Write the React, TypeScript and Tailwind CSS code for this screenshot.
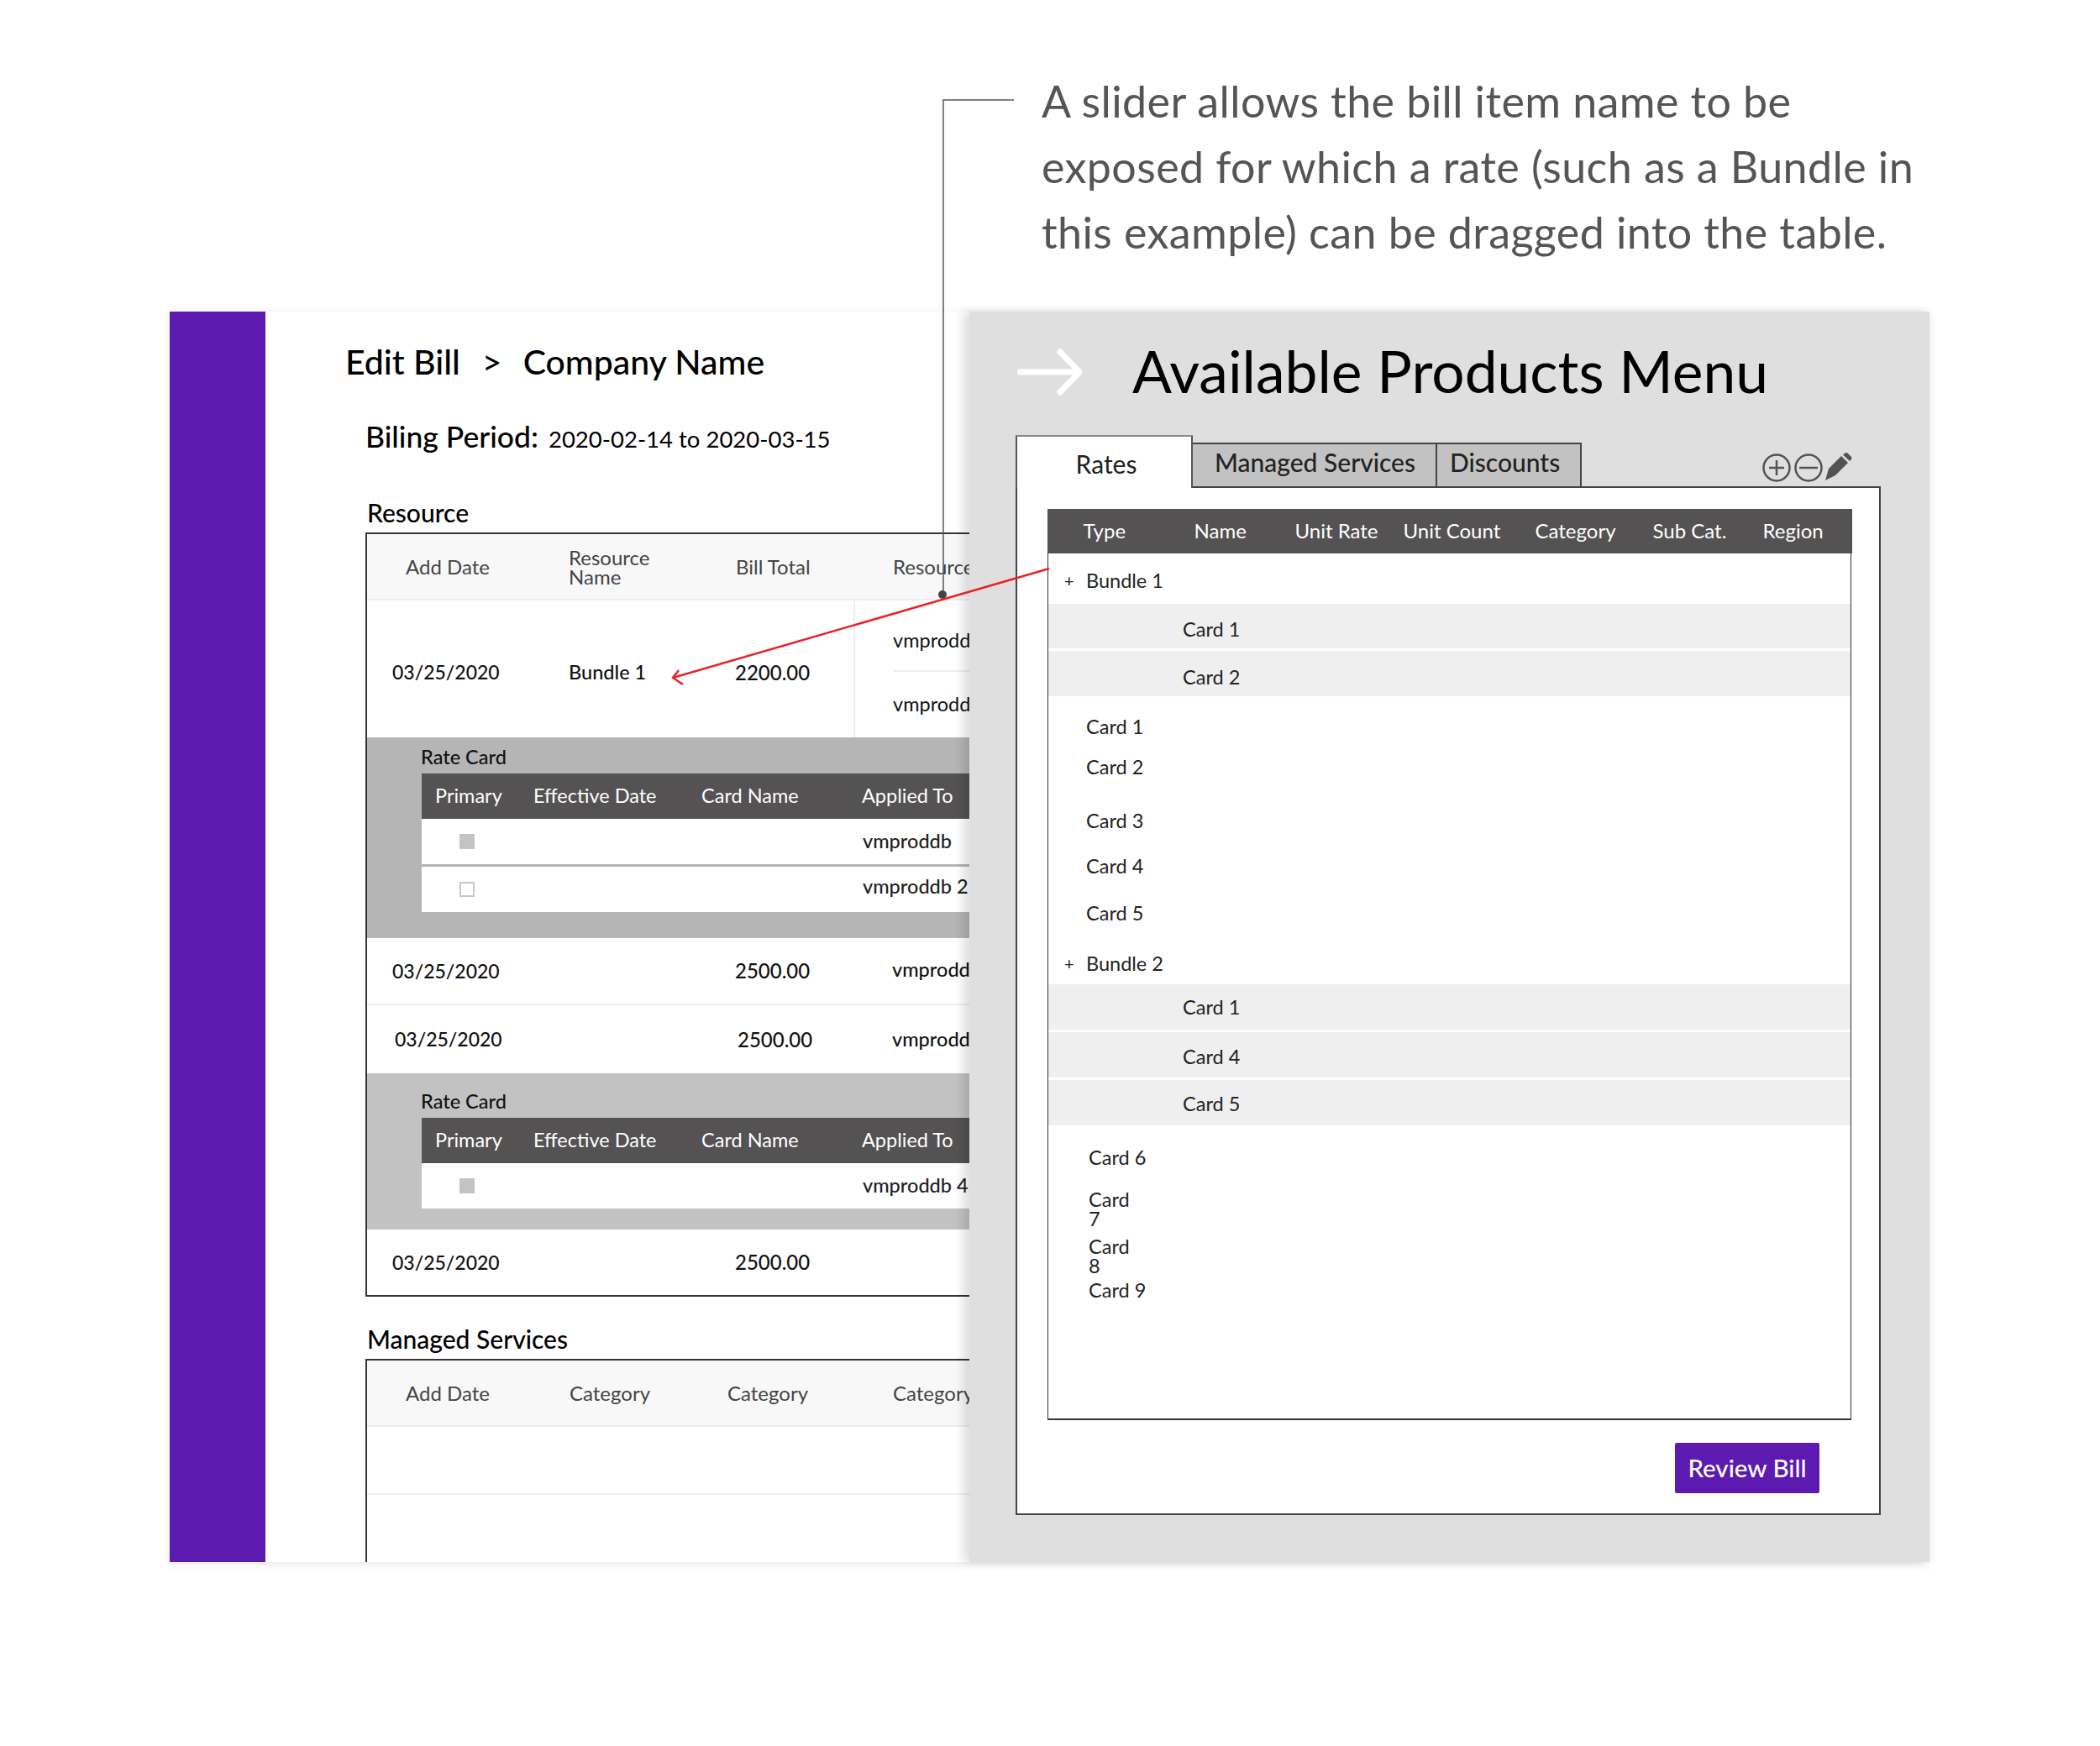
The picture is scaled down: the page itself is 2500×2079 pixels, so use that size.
const font = { fontFamily: "Lato, sans-serif" };

function Header({ labels }: { labels: { text: React.ReactNode; w: string }[] }) {
  return (
    <div className="flex h-[79px] items-center border-b-2 border-[#eeeeee] bg-[#f8f8f8] pl-[46px] text-[24px] leading-[23px] text-[#444444]">
      {labels.map((l, i) => (
        <div key={i} className={`${l.w} shrink-0`}>
          {l.text}
        </div>
      ))}
    </div>
  );
}

function RateCard({ rows, bg, h, top }: { rows: { filled: boolean; name: string; pb?: string }[]; bg: string; h: string; top: string }) {
  return (
    <div className={`${bg} ${h} ${top} pl-[64px] text-[23.5px]`}>
      <div className="h-[30px] font-medium leading-[30px] text-[#111111]">Rate Card</div>
      <div className="ml-[1px] mt-[5px] flex h-[54px] items-center bg-[#545253] pl-[16px] text-white">
        <div className="w-[117px]">Primary</div>
        <div className="w-[200px]">Effective Date</div>
        <div className="w-[191px]">Card Name</div>
        <div>Applied To</div>
      </div>
      {rows.map((r, i) => (
        <div key={i} className={`ml-[1px] flex h-[54px] items-center bg-white ${i > 0 ? "mt-[3px]" : ""}`}>
          <div className={`ml-[45px] h-[18px] w-[18px] ${r.filled ? "bg-[#c4c4c4]" : "border-2 border-[#c8c8c8]"}`} />
          <div className={`ml-[462px] whitespace-nowrap font-medium text-[#222222] ${r.pb ?? ""}`}>{r.name}</div>
        </div>
      ))}
    </div>
  );
}

function GrayRow({ label, h, pt }: { label: string; h: string; pt: string }) {
  return <div className={`flex items-center bg-[#efefef] pl-[160px] text-[#222222] ${h} ${pt}`}>{label}</div>;
}

export default function App() {
  return (
    <div className="relative h-[2079px] w-[2500px] overflow-hidden bg-white" style={font}>
      <div className="h-[371px] pl-[1240px] pt-[81px] text-[52px] leading-[78px] tracking-[0.4px] text-[#555555]">
        <div>A slider allows the bill item name to be</div>
        <div>exposed for which a rate (such as a Bundle in</div>
        <div>this example) can be dragged into the table.</div>
      </div>

      <div className="ml-[202px] flex h-[1489px] w-[2095px] shadow-[0_2px_10px_rgba(0,0,0,0.1)]">
        <div className="w-[114px] shrink-0 bg-[#5d1ab0]" />

        <div className="h-full w-[838px] shrink-0 overflow-hidden text-[#111111]">
          <div className="ml-[95px] mt-[40px] flex h-[40px] items-center whitespace-nowrap text-[41px] font-medium text-black">
            <span>Edit Bill</span>
            <span className="ml-[26px] font-normal">&gt;</span>
            <span className="ml-[25px]">Company Name</span>
          </div>
          <div className="ml-[119px] mt-[42px] flex h-[36px] items-baseline whitespace-nowrap text-black">
            <span className="text-[35.5px] font-medium">Biling Period:</span>
            <span className="ml-[12px] text-[27.5px]">2020-02-14 to 2020-03-15</span>
          </div>
          <div className="ml-[121px] mt-[65px] h-[32px] text-[30px] font-medium leading-[32px] text-black">Resource</div>

          <div className="ml-[119px] mt-[8px] w-[800px] border-y-2 border-l-2 border-[#333333]">
            <Header
              labels={[
                { text: "Add Date", w: "w-[194px]" },
                { text: <>Resource<br />Name</>, w: "w-[199px]" },
                { text: "Bill Total", w: "w-[187px]" },
                { text: "Resource", w: "w-[200px]" },
              ]}
            />
            <div className="flex h-[163px] pl-[30px] text-[24px]">
              <div className="flex w-[210px] items-center pt-2 text-[23px] font-medium">03/25/2020</div>
              <div className="flex w-[198px] items-center pt-2 text-[23.5px] font-medium">Bundle 1</div>
              <div className="flex w-[141px] items-center pt-2 font-medium">2200.00</div>
              <div className="flex-1 border-l-2 border-[#eeeeee] pl-[45px] text-[23.5px]">
                <div className="flex h-[85px] items-center border-b-2 border-[#eeeeee] pt-[12px]">vmproddb</div>
                <div className="flex h-[78px] items-center">vmproddb</div>
              </div>
            </div>
            <RateCard
              bg="bg-[#b5b5b5]"
              h="h-[239px]"
              top="pt-[8px]"
              rows={[
                { filled: true, name: "vmproddb" },
                { filled: false, name: "vmproddb 2", pb: "pb-[7px]" },
              ]}
            />
            <div className="flex h-[80px] items-center border-b-2 border-[#eeeeee] pl-[30px] text-[24px] font-medium">
              <div className="w-[408px] text-[23px]">03/25/2020</div>
              <div className="w-[187px]">2500.00</div>
              <div className="pb-[3px] text-[23.5px]">vmproddb</div>
            </div>
            <div className="flex h-[81px] items-center pl-[33px] text-[24px] font-medium">
              <div className="w-[408px] text-[23px]">03/25/2020</div>
              <div className="w-[184px]">2500.00</div>
              <div className="text-[23.5px]">vmproddb</div>
            </div>
            <RateCard bg="bg-[#c2c2c2]" h="h-[186px]" top="pt-[18px]" rows={[{ filled: true, name: "vmproddb 4" }]} />
            <div className="flex h-[78px] items-center pl-[30px] text-[24px] font-medium">
              <div className="w-[408px] text-[23px]">03/25/2020</div>
              <div>2500.00</div>
            </div>
          </div>

          <div className="ml-[121px] mt-[34px] h-[32px] text-[30px] font-medium leading-[32px] text-black">Managed Services</div>
          <div className="ml-[119px] mt-[8px] w-[800px] border-l-2 border-t-2 border-[#333333]">
            <Header
              labels={[
                { text: "Add Date", w: "w-[195px]" },
                { text: "Category", w: "w-[188px]" },
                { text: "Category", w: "w-[197px]" },
                { text: "Category", w: "w-[200px]" },
              ]}
            />
            <div className="h-[81px] border-b-2 border-[#eeeeee]" />
            <div className="h-[81px]" />
          </div>
        </div>

        <div className="relative w-[1143px] shrink-0 bg-[#dfdfdf] shadow-[-8px_0_10px_rgba(0,0,0,0.12)]">
          <div className="flex h-[144px] items-center pl-[57px]">
            <svg width="78" height="56" viewBox="0 0 78 56" fill="none" stroke="white" strokeWidth="7" strokeLinecap="round" strokeLinejoin="round">
              <path d="M3 28H72" />
              <path d="M51 4L74 28L51 52" />
            </svg>
            <span className="mb-[3px] ml-[59px] whitespace-nowrap text-[69.5px] leading-none text-black">Available Products Menu</span>
          </div>

          <div className="ml-[55px] mt-[3px] flex h-[61px] w-[1030px] items-end">
            <div className="relative z-10 -mb-[2px] flex h-[63px] w-[211px] items-center justify-center rounded-t-[1px] border-x-2 border-t-2 border-x-[#555555] border-t-[#888888] bg-white pl-[5px] pt-1 text-[30px] text-[#222222]">
              Rates
            </div>
            <div className="flex h-[52px] w-[291px] items-center border-r-2 border-t-2 border-[#444444] bg-[#c2c2c2] pb-[7px] pl-[26px] text-[30px] font-medium text-[#222222]">
              Managed Services
            </div>
            <div className="flex h-[52px] w-[172px] items-center border-r-2 border-t-2 border-[#444444] bg-[#c2c2c2] pb-[7px] pl-[15px] text-[30px] font-medium text-[#222222]">
              Discounts
            </div>
            <svg className="mb-[5px] ml-[214px]" width="108" height="36" viewBox="0 0 108 36" fill="none" stroke="#545253" strokeWidth="2.5">
              <circle cx="18" cy="19" r="15.5" />
              <path d="M18 10V28M9 19H27" />
              <circle cx="56" cy="19" r="15.5" />
              <path d="M45 19H67" />
              <path d="M76 34L80 20L95 5L103 13L88 28Z" fill="#545253" stroke="none" />
              <path d="M97 3.5L99.5 1.5Q101 0.5 102.5 1.5L107 6Q108 7.5 107 9L105 11Z" fill="#545253" stroke="none" />
            </svg>
          </div>

          <div className="ml-[55px] h-[1225px] w-[1030px] border-2 border-[#444444] bg-white pl-[36px] pt-[25px]">
            <div className="h-[1085px] w-[957px] border-x-[1.5px] border-b-2 border-[#333333] text-[23.5px] leading-[30px] text-[#222222]">
              <div className="-mx-[1.5px] flex h-[53px] items-center bg-[#545253] pb-[2px] text-[24px] text-white">
                <span className="ml-[43px] w-[132px]">Type</span>
                <span className="w-[120px]">Name</span>
                <span className="w-[129px]">Unit Rate</span>
                <span className="w-[157px]">Unit Count</span>
                <span className="w-[140px]">Category</span>
                <span className="w-[131px]">Sub Cat.</span>
                <span>Region</span>
              </div>
              <div className="flex h-[60px] items-center pl-[19px] pt-[4px]">
                <span className="w-[26px] text-[20px]">+</span>
                <span>Bundle 1</span>
              </div>
              <GrayRow label="Card 1" h="h-[53px]" pt="pt-[7px]" />
              <div className="mt-[3px]">
                <GrayRow label="Card 2" h="h-[54px]" pt="pt-[8px]" />
              </div>
              <div className="pl-[45px]">
                <div className="mt-[21px]">Card 1</div>
                <div className="mt-[18px]">Card 2</div>
                <div className="mt-[34px]">Card 3</div>
                <div className="mt-[24px]">Card 4</div>
                <div className="mt-[26px]">Card 5</div>
              </div>
              <div className="mb-[10px] mt-[30px] flex pl-[19px]">
                <span className="w-[26px] text-[20px]">+</span>
                <span>Bundle 2</span>
              </div>
              <GrayRow label="Card 1" h="h-[54px]" pt="pt-0" />
              <div className="mt-[3px]">
                <GrayRow label="Card 4" h="h-[54px]" pt="pt-[4px]" />
              </div>
              <div className="mt-[3px]">
                <GrayRow label="Card 5" h="h-[54px]" pt="pt-[2px]" />
              </div>
              <div className="pl-[48px] leading-[23px]">
                <div className="mt-[27px]">Card 6</div>
                <div className="mt-[27px] w-[50px]">Card 7</div>
                <div className="mt-[10px] w-[50px]">Card 8</div>
                <div className="mt-[6px]">Card 9</div>
              </div>
            </div>
            <div className="flex justify-end pr-[71px] pt-[27px]">
              <div className="flex h-[60px] w-[172px] items-center justify-center rounded-[2px] bg-[#5d1ab0] text-[29.5px] font-medium text-white">
                Review Bill
              </div>
            </div>
          </div>
        </div>
      </div>

      <svg className="pointer-events-none absolute inset-0" width="2500" height="2079" fill="none">
        <path d="M1207 119H1123V708" stroke="#555555" strokeWidth="1.5" />
        <circle cx="1122" cy="708" r="5" fill="#444444" />
        <path d="M1249 677L801 807M808 798L801 807L813 815" stroke="#e8232a" strokeWidth="2.5" />
      </svg>
    </div>
  );
}
